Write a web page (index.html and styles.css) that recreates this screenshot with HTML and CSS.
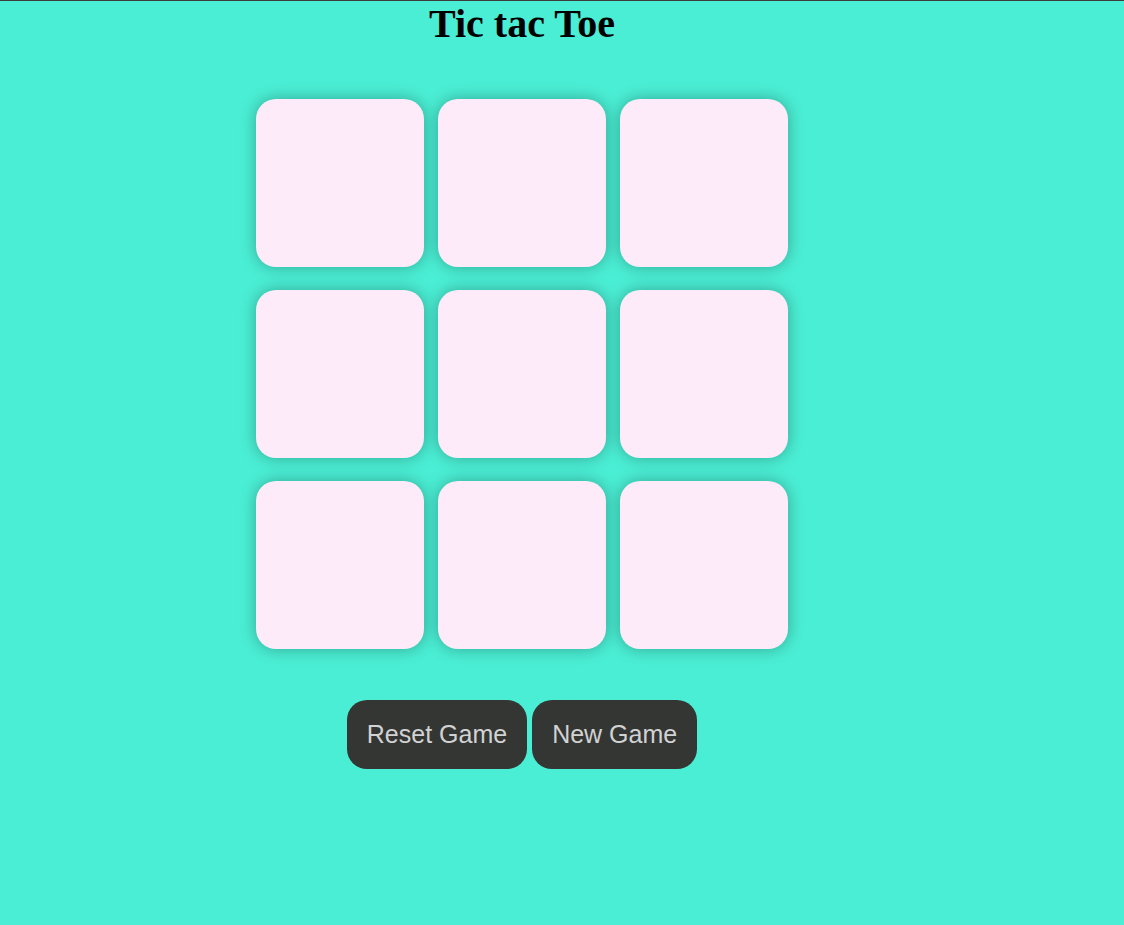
FILE: index.html
```html
<!DOCTYPE html>
<html lang="en">
<head>
<meta charset="utf-8">
<title>Tic tac Toe</title>
<link rel="stylesheet" href="styles.css">
</head>
<body>
<main class="page">
  <h1 class="title">Tic tac Toe</h1>
  <div class="board">
    <button class="box"></button>
    <button class="box"></button>
    <button class="box"></button>
    <button class="box"></button>
    <button class="box"></button>
    <button class="box"></button>
    <button class="box"></button>
    <button class="box"></button>
    <button class="box"></button>
  </div>
  <div class="controls">
    <button class="btn">Reset Game</button>
    <button class="btn">New Game</button>
  </div>
</main>
</body>
</html>
```

FILE: styles.css
```css
html {
  background: #4aeed4;
}
body {
  margin: 0;
  min-height: 924px;
  border-top: 1px solid #3c3c3c;
  background: #4aeed4;
}
.page {
  width: 1044px;
  display: flex;
  flex-direction: column;
  align-items: center;
}
.title {
  margin: 0;
  font-family: "Liberation Serif", "Times New Roman", serif;
  font-weight: bold;
  font-size: 40px;
  line-height: 45px;
  color: #000;
}
.board {
  margin-top: 53px;
  display: grid;
  grid-template-columns: repeat(3, 168px);
  grid-auto-rows: 168px;
  column-gap: 14px;
  row-gap: 23px;
}
.box {
  border: none;
  border-radius: 20px;
  background: #fdebf9;
  box-shadow: 0 0 16px rgba(0, 0, 0, 0.3);
  padding: 0;
}
.controls {
  margin-top: 51px;
  display: flex;
  gap: 5px;
}
.btn {
  border: none;
  border-radius: 20px;
  background: #343634;
  color: #d2d2d2;
  font-family: "Liberation Sans", Arial, sans-serif;
  font-size: 25px;
  line-height: 29px;
  padding: 20px 20px;
}
```
